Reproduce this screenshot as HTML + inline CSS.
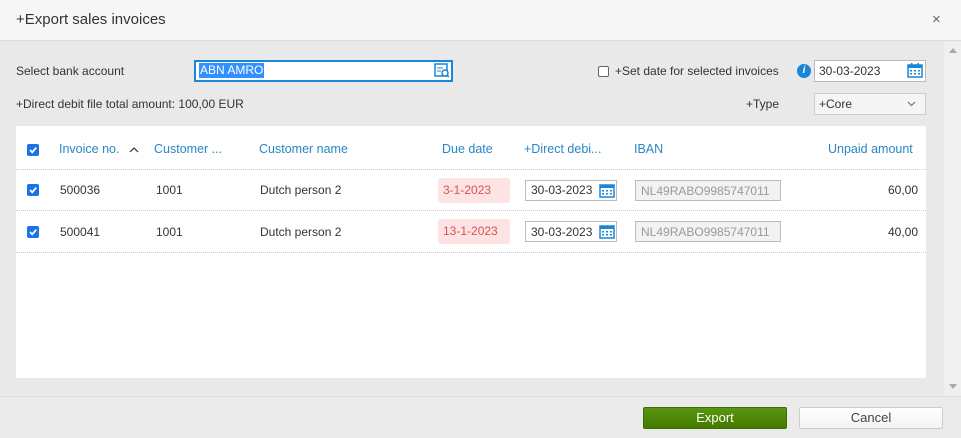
<!DOCTYPE html>
<html><head><meta charset="utf-8"><style>
*{box-sizing:border-box;margin:0;padding:0}
body{width:961px;height:438px;overflow:hidden;font-family:"Liberation Sans",sans-serif;font-size:12px;color:#333;background:#e9e9e9;position:relative}
.a{position:absolute}
.hdr{left:0;top:0;width:961px;height:41px;background:#f7f7f7;border-bottom:1px solid #ddd}
.ftr{left:0;top:396px;width:961px;height:42px;background:#ebebeb;border-top:1px solid #ddd}
.blue{color:#2a86c7;font-size:12.5px}
.chk{width:12px;height:12px;background:#1a73e8;border-radius:2px}
.chk svg{display:block}
.dl{height:1px;border-top:1px dotted #ccc;left:16px;width:910px}
.inp{background:#fff;border:1px solid #bbb}
.cal{width:16px;height:16px}
</style></head><body>
<div class="a hdr"></div>
<div class="a" style="left:16px;top:11px;font-size:15px;color:#333">+Export sales invoices</div>
<div class="a" style="left:932px;top:11px;font-size:15px;color:#666">×</div>
<div class="a" style="left:944px;top:42px;width:17px;height:354px;background:#f0f0f0"></div>
<div class="a" style="left:949px;top:48px;border:4px solid transparent;border-bottom:5px solid #aaa;border-top:0"></div>
<div class="a" style="left:949px;top:384px;border:4px solid transparent;border-top:5px solid #aaa;border-bottom:0"></div>

<div class="a" style="left:16px;top:64px">Select bank account</div>
<div class="a" style="left:194px;top:60px;width:259px;height:22px;border:2px solid #1a86d8;background:#fff"></div>
<div class="a" style="left:199px;top:63px;background:#3390ff;color:#fff;padding:0 1px;line-height:15px">ABN AMRO</div>
<svg class="a" style="left:434px;top:63px" width="16" height="15"><rect x="1" y="1" width="12" height="12" fill="none" stroke="#1a86d8" stroke-width="1.5"/><line x1="3" y1="5" x2="9" y2="5" stroke="#1a86d8"/><line x1="3" y1="8" x2="7" y2="8" stroke="#1a86d8"/><circle cx="11" cy="10" r="3" fill="#fff" stroke="#1a86d8" stroke-width="1.5"/><line x1="13" y1="12" x2="15" y2="14" stroke="#1a86d8" stroke-width="1.5"/></svg>
<div class="a" style="left:16px;top:97px">+Direct debit file total amount: 100,00 EUR</div>

<div class="a" style="left:598px;top:66px;width:11px;height:11px;border:1px solid #666;border-radius:2px;background:#fff"></div>
<div class="a" style="left:615px;top:64px">+Set date for selected invoices</div>
<div class="a" style="left:797px;top:64px;width:14px;height:14px;border-radius:50%;background:#1a86d8;color:#fff;font-size:10px;font-weight:bold;font-style:italic;text-align:center;line-height:14px">i</div>
<div class="a inp" style="left:814px;top:60px;width:112px;height:22px"></div>
<div class="a" style="left:819px;top:64px">30-03-2023</div>
<svg class="a cal" style="left:907px;top:62px" viewBox="0 0 16 16"><rect x="1" y="3" width="14" height="12" fill="#fff" stroke="#1a86d8" stroke-width="1.5"/><rect x="1" y="3" width="14" height="3" fill="#1a86d8"/><rect x="4" y="1" width="1.5" height="3" fill="#1a86d8"/><rect x="10.5" y="1" width="1.5" height="3" fill="#1a86d8"/><g fill="#1a86d8"><rect x="3" y="8" width="2" height="1.5"/><rect x="7" y="8" width="2" height="1.5"/><rect x="11" y="8" width="2" height="1.5"/><rect x="3" y="11" width="2" height="1.5"/><rect x="7" y="11" width="2" height="1.5"/><rect x="11" y="11" width="2" height="1.5"/></g></svg>
<div class="a" style="left:746px;top:97px">+Type</div>
<div class="a" style="left:814px;top:93px;width:112px;height:22px;border:1px solid #ccc;background:#f5f5f5"></div>
<div class="a" style="left:819px;top:97px">+Core</div>
<svg class="a" style="left:907px;top:101px" width="9" height="6"><path d="M1 1 L4.5 4.5 L8 1" fill="none" stroke="#666"/></svg>

<div class="a" style="left:16px;top:126px;width:910px;height:252px;background:#fff"></div>
<div class="a chk" style="left:27px;top:144px"><svg width="12" height="12"><path d="M3 6 L5.2 8.3 L9.3 3.6" fill="none" stroke="#fff" stroke-width="1.8"/></svg></div>
<div class="a blue" style="left:59px;top:142px">Invoice no.</div>
<svg class="a" style="left:129px;top:147px" width="10" height="6"><path d="M1 5 L5 1 L9 5" fill="none" stroke="#333" stroke-width="1.2"/></svg>
<div class="a blue" style="left:154px;top:142px">Customer ...</div>
<div class="a blue" style="left:259px;top:142px">Customer name</div>
<div class="a blue" style="left:442px;top:142px">Due date</div>
<div class="a blue" style="left:524px;top:142px">+Direct debi...</div>
<div class="a blue" style="left:634px;top:142px">IBAN</div>
<div class="a blue" style="left:828px;top:142px">Unpaid amount</div>
<div class="a dl" style="top:169px"></div>
<div class="a dl" style="top:210px"></div>
<div class="a dl" style="top:252px"></div>

<div class="a chk" style="left:27px;top:184px"><svg width="12" height="12"><path d="M3 6 L5.2 8.3 L9.3 3.6" fill="none" stroke="#fff" stroke-width="1.8"/></svg></div>
<div class="a" style="left:60px;top:183px">500036</div>
<div class="a" style="left:156px;top:183px">1001</div>
<div class="a" style="left:260px;top:183px">Dutch person 2</div>
<div class="a" style="left:438px;top:178px;width:72px;height:25px;background:#fde3e3;border-radius:3px;color:#d9534f;padding:5px 0 0 5px">3-1-2023</div>
<div class="a inp" style="left:525px;top:180px;width:92px;height:21px"></div>
<div class="a" style="left:531px;top:183px">30-03-2023</div>
<svg class="a cal" style="left:599px;top:182px" viewBox="0 0 16 16"><rect x="1" y="3" width="14" height="12" fill="#fff" stroke="#1a86d8" stroke-width="1.5"/><rect x="1" y="3" width="14" height="3" fill="#1a86d8"/><g fill="#1a86d8"><rect x="3" y="8" width="2" height="1.5"/><rect x="7" y="8" width="2" height="1.5"/><rect x="11" y="8" width="2" height="1.5"/><rect x="3" y="11" width="2" height="1.5"/><rect x="7" y="11" width="2" height="1.5"/><rect x="11" y="11" width="2" height="1.5"/></g></svg>
<div class="a" style="left:635px;top:180px;width:146px;height:21px;background:#f2f2f2;border:1px solid #bbb;color:#999;padding:3px 0 0 5px">NL49RABO9985747011</div>
<div class="a" style="left:880px;top:183px;width:38px;text-align:right">60,00</div>

<div class="a chk" style="left:27px;top:226px"><svg width="12" height="12"><path d="M3 6 L5.2 8.3 L9.3 3.6" fill="none" stroke="#fff" stroke-width="1.8"/></svg></div>
<div class="a" style="left:60px;top:225px">500041</div>
<div class="a" style="left:156px;top:225px">1001</div>
<div class="a" style="left:260px;top:225px">Dutch person 2</div>
<div class="a" style="left:438px;top:219px;width:72px;height:25px;background:#fde3e3;border-radius:3px;color:#d9534f;padding:5px 0 0 5px">13-1-2023</div>
<div class="a inp" style="left:525px;top:221px;width:92px;height:21px"></div>
<div class="a" style="left:531px;top:225px">30-03-2023</div>
<svg class="a cal" style="left:599px;top:223px" viewBox="0 0 16 16"><rect x="1" y="3" width="14" height="12" fill="#fff" stroke="#1a86d8" stroke-width="1.5"/><rect x="1" y="3" width="14" height="3" fill="#1a86d8"/><g fill="#1a86d8"><rect x="3" y="8" width="2" height="1.5"/><rect x="7" y="8" width="2" height="1.5"/><rect x="11" y="8" width="2" height="1.5"/><rect x="3" y="11" width="2" height="1.5"/><rect x="7" y="11" width="2" height="1.5"/><rect x="11" y="11" width="2" height="1.5"/></g></svg>
<div class="a" style="left:635px;top:221px;width:146px;height:21px;background:#f2f2f2;border:1px solid #bbb;color:#999;padding:3px 0 0 5px">NL49RABO9985747011</div>
<div class="a" style="left:880px;top:225px;width:38px;text-align:right">40,00</div>

<div class="a ftr"></div>
<div class="a" style="left:643px;top:407px;width:144px;height:22px;background:linear-gradient(#5a9610,#437a00);border:1px solid #3d6e00;border-radius:2px;color:#fff;text-align:center;line-height:20px;font-size:13px">Export</div>
<div class="a" style="left:799px;top:407px;width:144px;height:22px;background:linear-gradient(#fff,#f3f3f3);border:1px solid #ccc;border-radius:2px;color:#444;text-align:center;line-height:20px;font-size:13px">Cancel</div>
</body></html>
